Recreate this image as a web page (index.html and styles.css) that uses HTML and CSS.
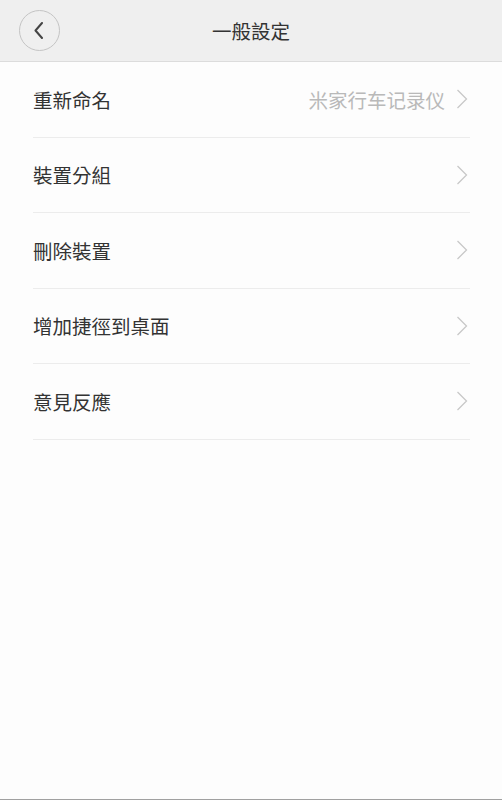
FILE: index.html
```html
<!DOCTYPE html>
<html lang="zh-Hant">
<head>
<meta charset="utf-8">
<title>一般設定</title>
<link rel="stylesheet" href="styles.css">
</head>
<body>
<div class="page">
  <header class="topbar">
    <button class="back" aria-label="返回">
      <svg width="10" height="17" viewBox="0 0 10 17"><polyline points="8,1 1.5,8.5 8,16" fill="none" stroke="#444" stroke-width="2" stroke-linejoin="round" stroke-linecap="round"/></svg>
    </button>
    <h1 class="title">一般設定</h1>
  </header>
  <ul class="list">
    <li class="row"><span class="label">重新命名</span><span class="value">米家行车记录仪</span><svg class="chev" width="12" height="20" viewBox="0 0 12 20"><polyline points="1.5,1 10.5,10 1.5,19" fill="none" stroke="#c8c8c8" stroke-width="1.3"/></svg></li>
    <li class="row"><span class="label">裝置分組</span><svg class="chev" width="12" height="20" viewBox="0 0 12 20"><polyline points="1.5,1 10.5,10 1.5,19" fill="none" stroke="#c8c8c8" stroke-width="1.3"/></svg></li>
    <li class="row"><span class="label">刪除裝置</span><svg class="chev" width="12" height="20" viewBox="0 0 12 20"><polyline points="1.5,1 10.5,10 1.5,19" fill="none" stroke="#c8c8c8" stroke-width="1.3"/></svg></li>
    <li class="row"><span class="label">增加捷徑到桌面</span><svg class="chev" width="12" height="20" viewBox="0 0 12 20"><polyline points="1.5,1 10.5,10 1.5,19" fill="none" stroke="#c8c8c8" stroke-width="1.3"/></svg></li>
    <li class="row"><span class="label">意見反應</span><svg class="chev" width="12" height="20" viewBox="0 0 12 20"><polyline points="1.5,1 10.5,10 1.5,19" fill="none" stroke="#c8c8c8" stroke-width="1.3"/></svg></li>
  </ul>
</div>
</body>
</html>
```
FILE: styles.css
```css
* { box-sizing: border-box; }
html, body { margin: 0; padding: 0; }
body {
  background: #fdfdfd;
  font-family: "Noto Sans CJK TC", "Noto Sans CJK SC", "Noto Sans", sans-serif;
  color: #333;
}
.page {
  min-height: 800px;
  border-bottom: 1px solid #a0a0a0;
  display: flex;
  flex-direction: column;
}
.topbar {
  height: 62px;
  background: #efefef;
  border-bottom: 1px solid #dcdcdc;
  display: flex;
  align-items: center;
  justify-content: center;
  position: relative;
}
.back {
  position: absolute;
  left: 19px;
  top: 10px;
  width: 41px;
  height: 41px;
  border-radius: 50%;
  border: 1px solid #c4c4c4;
  background: transparent;
  padding: 0 2px 0 0;
  display: flex;
  align-items: center;
  justify-content: center;
}
.title {
  margin: 0;
  font-size: 19.5px;
  font-weight: 400;
  color: #333;
  line-height: 1;
}
.list {
  list-style: none;
  margin: 0 32px 0 33px;
  padding: 0;
}
.row {
  height: 75.5px;
  border-bottom: 1px solid #ececec;
  display: flex;
  align-items: center;
  padding-right: 2px;
}
.label {
  font-size: 19.5px;
  color: #333;
  flex: 1;
}
.value {
  font-size: 19.5px;
  color: #b9b9b9;
  margin-right: 11px;
}
.chev { display: block; }
```
